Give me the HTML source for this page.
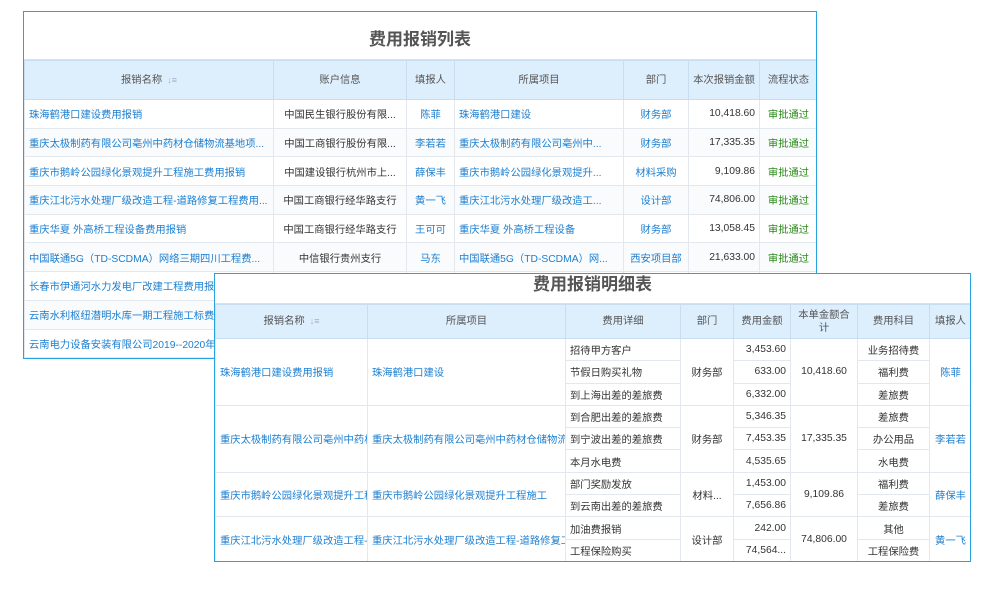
<!DOCTYPE html>
<html><head><meta charset="utf-8"><style>
*{margin:0;padding:0;box-sizing:border-box}
body{width:1000px;height:600px;background:#fff;position:relative;overflow:hidden;font-family:"Liberation Sans","Noto Sans CJK SC",sans-serif;font-size:10.3px;color:#333}
.box{position:absolute;background:#fff;border:1px solid #29a3e0;overflow:hidden}
.title{text-align:center;font-weight:bold;color:#555;font-size:17px;border-bottom:1px solid #cfe3f3}
table{border-collapse:collapse;table-layout:fixed;position:absolute;left:0}
td,th{border:1px solid #e3e8ee;white-space:nowrap;overflow:hidden;text-overflow:ellipsis;padding:0 4px;font-weight:normal}
th{background:#ddeefc;color:#555;text-align:center;line-height:13px;border-color:#c8ddf0;white-space:normal}
.l{color:#1c7fd0}
.c{text-align:center}
.r{text-align:right}
.g{color:#2c8a1b;text-align:center}
.k{text-overflow:clip}
tr.z td{background:#fafbfc}
.s{color:#aac;font-size:9px;margin-left:5px}
</style></head><body>

<div class="box" style="left:23px;top:11px;width:794px;height:348px">
<div class="title" style="height:48px;line-height:56px">费用报销列表</div>
<table style="top:48px;width:793px">
<colgroup><col style="width:249px"><col style="width:133px"><col style="width:48px"><col style="width:169px"><col style="width:65px"><col style="width:71px"><col style="width:58px"></colgroup>
<tr style="height:39px"><th>报销名称<span class="s">↓≡</span></th><th>账户信息</th><th>填报人</th><th>所属项目</th><th>部门</th><th>本次报销金额</th><th>流程状态</th></tr>
<tr style="height:28.7px"><td class="l">珠海鹤港口建设费用报销</td><td class="c">中国民生银行股份有限...</td><td class="c l">陈菲</td><td class="l">珠海鹤港口建设</td><td class="c l">财务部</td><td class="r">10,418.60</td><td class="g">审批通过</td></tr>
<tr class="z" style="height:28.7px"><td class="l">重庆太极制药有限公司亳州中药材仓储物流基地项...</td><td class="c">中国工商银行股份有限...</td><td class="c l">李若若</td><td class="l">重庆太极制药有限公司亳州中...</td><td class="c l">财务部</td><td class="r">17,335.35</td><td class="g">审批通过</td></tr>
<tr style="height:28.7px"><td class="l">重庆市鹅岭公园绿化景观提升工程施工费用报销</td><td class="c">中国建设银行杭州市上...</td><td class="c l">薛保丰</td><td class="l">重庆市鹅岭公园绿化景观提升...</td><td class="c l">材料采购</td><td class="r">9,109.86</td><td class="g">审批通过</td></tr>
<tr class="z" style="height:28.7px"><td class="l">重庆江北污水处理厂级改造工程-道路修复工程费用...</td><td class="c">中国工商银行经华路支行</td><td class="c l">黄一飞</td><td class="l">重庆江北污水处理厂级改造工...</td><td class="c l">设计部</td><td class="r">74,806.00</td><td class="g">审批通过</td></tr>
<tr style="height:28.7px"><td class="l">重庆华夏 外高桥工程设备费用报销</td><td class="c">中国工商银行经华路支行</td><td class="c l">王可可</td><td class="l">重庆华夏 外高桥工程设备</td><td class="c l">财务部</td><td class="r">13,058.45</td><td class="g">审批通过</td></tr>
<tr class="z" style="height:28.7px"><td class="l">中国联通5G（TD-SCDMA）网络三期四川工程费...</td><td class="c">中信银行贵州支行</td><td class="c l">马东</td><td class="l">中国联通5G（TD-SCDMA）网...</td><td class="c l">西安项目部</td><td class="r">21,633.00</td><td class="g">审批通过</td></tr>
<tr style="height:28.7px"><td class="l">长春市伊通河水力发电厂改建工程费用报销</td><td></td><td></td><td></td><td></td><td></td><td></td></tr>
<tr class="z" style="height:28.7px"><td class="l">云南水利枢纽潜明水库一期工程施工标费用报销</td><td></td><td></td><td></td><td></td><td></td><td></td></tr>
<tr style="height:28.7px"><td class="l">云南电力设备安装有限公司2019--2020年度费用</td><td></td><td></td><td></td><td></td><td></td><td></td></tr>
</table>
</div>

<div class="box" style="left:214px;top:273px;width:757px;height:289px">
<div class="title" style="height:30px;line-height:22px">费用报销明细表</div>
<table style="top:30px;width:756px">
<colgroup><col style="width:152px"><col style="width:198px"><col style="width:115px"><col style="width:53px"><col style="width:57px"><col style="width:67px"><col style="width:72px"><col style="width:42px"></colgroup>
<tr style="height:34px"><th>报销名称<span class="s">↓≡</span></th><th>所属项目</th><th>费用详细</th><th>部门</th><th>费用金额</th><th>本单金额合计</th><th>费用科目</th><th>填报人</th></tr>
<tr style="height:22.3px"><td rowspan="3" class="l k">珠海鹤港口建设费用报销</td><td rowspan="3" class="l k">珠海鹤港口建设</td><td>招待甲方客户</td><td rowspan="3" class="c">财务部</td><td class="r">3,453.60</td><td rowspan="3" class="c">10,418.60</td><td class="c">业务招待费</td><td rowspan="3" class="c l">陈菲</td></tr>
<tr style="height:22.3px"><td>节假日购买礼物</td><td class="r">633.00</td><td class="c">福利费</td></tr>
<tr style="height:22.3px"><td>到上海出差的差旅费</td><td class="r">6,332.00</td><td class="c">差旅费</td></tr>
<tr style="height:22.3px"><td rowspan="3" class="l k">重庆太极制药有限公司亳州中药材</td><td rowspan="3" class="l k">重庆太极制药有限公司亳州中药材仓储物流</td><td>到合肥出差的差旅费</td><td rowspan="3" class="c">财务部</td><td class="r">5,346.35</td><td rowspan="3" class="c">17,335.35</td><td class="c">差旅费</td><td rowspan="3" class="c l">李若若</td></tr>
<tr style="height:22.3px"><td>到宁波出差的差旅费</td><td class="r">7,453.35</td><td class="c">办公用品</td></tr>
<tr style="height:22.3px"><td>本月水电费</td><td class="r">4,535.65</td><td class="c">水电费</td></tr>
<tr style="height:22.3px"><td rowspan="2" class="l k">重庆市鹅岭公园绿化景观提升工程</td><td rowspan="2" class="l k">重庆市鹅岭公园绿化景观提升工程施工</td><td>部门奖励发放</td><td rowspan="2" class="c">材料...</td><td class="r">1,453.00</td><td rowspan="2" class="c">9,109.86</td><td class="c">福利费</td><td rowspan="2" class="c l">薛保丰</td></tr>
<tr style="height:22.3px"><td>到云南出差的差旅费</td><td class="r">7,656.86</td><td class="c">差旅费</td></tr>
<tr style="height:22.3px"><td rowspan="2" class="l k">重庆江北污水处理厂级改造工程-</td><td rowspan="2" class="l k">重庆江北污水处理厂级改造工程-道路修复工程</td><td>加油费报销</td><td rowspan="2" class="c">设计部</td><td class="r">242.00</td><td rowspan="2" class="c">74,806.00</td><td class="c">其他</td><td rowspan="2" class="c l">黄一飞</td></tr>
<tr style="height:22.3px"><td>工程保险购买</td><td class="r">74,564...</td><td class="c">工程保险费</td></tr>
</table>
</div>
</body></html>
